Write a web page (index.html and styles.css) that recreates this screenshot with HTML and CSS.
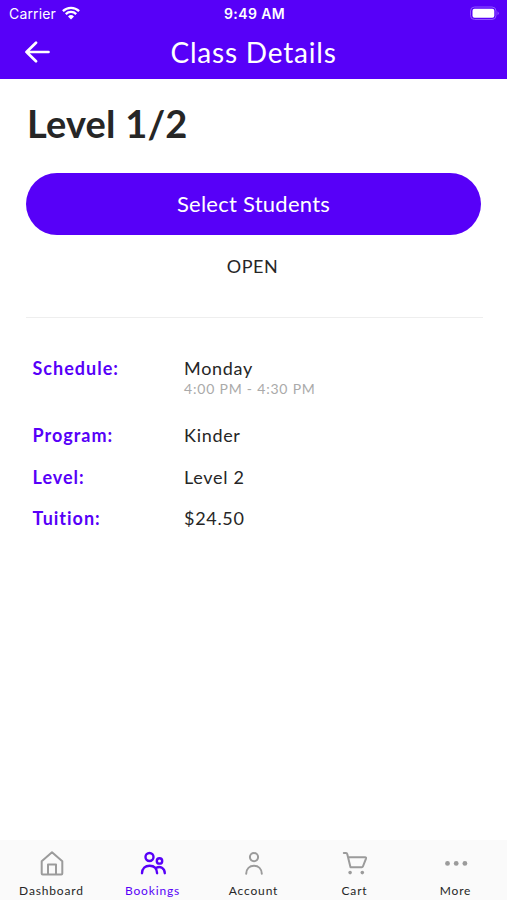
FILE: index.html
```html
<!DOCTYPE html>
<html lang="en">
<head>
<meta charset="utf-8">
<title>Class Details</title>
<link rel="stylesheet" href="styles.css">
</head>
<body>
<div class="screen">
  <header class="header">
    <div class="status">
      <div class="carrier"><span>Carrier</span>
        <svg width="18" height="14" viewBox="0 0 18 14" fill="none" stroke="#fff" stroke-width="2.3"><path d="M.9 5.1a11.6 11.6 0 0 1 16.2 0M3.8 8.1a7.4 7.4 0 0 1 10.4 0"/><path d="M6 10.5a4.3 4.3 0 0 1 6 0L9 13.500z" fill="#fff" stroke="none"/></svg>
      </div>
      <span class="time">9:49 AM</span>
      <svg class="battery" width="31" height="15" viewBox="0 0 31 15"><rect x="1.500" y="1" width="25.500" height="12.500" rx="4" fill="none" stroke="#8f55ff"/><rect x="3.500" y="2.800" width="21.800" height="9" rx="2" fill="#fff"/><path d="M28.500 5.300q2.600 2 0 4z" fill="#8f55ff"/></svg>
    </div>
    <div class="titlebar">
      <svg class="back" width="26" height="22" viewBox="0 0 26 22" fill="none" stroke="#fff" stroke-width="2.7" stroke-linecap="round" stroke-linejoin="round"><path d="M24.500 11H2.500M12 1.700L2.500 11l9.500 9.300"/></svg>
      <h1 class="title">Class Details</h1>
    </div>
  </header>
  <main class="content">
    <h2 class="name">Level 1/2</h2>
    <button class="select"><span>Select Students</span></button>
    <p class="state"><span>OPEN</span></p>
    <dl class="details">
      <div class="row tall"><dt>Schedule:</dt><dd><span>Monday</span><small>4:00 PM - 4:30 PM</small></dd></div>
      <div class="row"><dt>Program:</dt><dd>Kinder</dd></div>
      <div class="row"><dt>Level:</dt><dd>Level 2</dd></div>
      <div class="row"><dt>Tuition:</dt><dd>$24.50</dd></div>
    </dl>
  </main>
  <nav class="tabs">
    <a class="tab"><svg viewBox="0 0 26 26"><path d="M2.700 11.200L13 2.200l10.300 9v12.300q0 1-1 1H3.700q-1 0-1-1zM9 24.300v-9.800h8v9.800"/></svg><span>Dashboard</span></a>
    <a class="tab active"><svg viewBox="0 0 26 26"><circle cx="9.500" cy="7" r="4"/><circle cx="19.500" cy="10.900" r="2.700"/><path d="M2 23.200C2.200 18.400 5.300 15.700 9.600 15.700s7.300 2.700 7.500 7.500M16.300 17.800c3.900-2.200 8.300.2 8.500 5.400"/></svg><span>Bookings</span></a>
    <a class="tab"><svg viewBox="0 0 26 26"><circle cx="13" cy="7.100" r="4.100"/><path d="M5.200 23.700C5.400 18.700 8.600 15.800 13 15.800s7.600 2.900 7.800 7.900"/></svg><span>Account</span></a>
    <a class="tab"><svg viewBox="0 0 26 26"><path d="M1.800 3h2.200q1 0 1.300 1.200L8.500 17.300h11.300q.8 0 1.100-.8L24 8.600q.4-1.400-1-1.400H6.200"/><g fill="currentColor" stroke="none"><circle cx="8.100" cy="22.600" r="1.800"/><circle cx="20.300" cy="22.600" r="1.800"/></g></svg><span>Cart</span></a>
    <a class="tab"><svg viewBox="0 0 26 26"><g fill="currentColor" stroke="none"><circle cx="4.500" cy="13.400" r="2.400"/><circle cx="13.200" cy="13.400" r="2.400"/><circle cx="21.900" cy="13.400" r="2.400"/></g></svg><span>More</span></a>
  </nav>
</div>
</body>
</html>
```

FILE: styles.css
```css
* { box-sizing: border-box; }
body, h1, h2, p, dl, dd { margin: 0; }
body { background: #fff; color: #262626; font-family: Lato, "Open Sans", sans-serif; }
.screen { width: 507px; height: 900px; display: flex; flex-direction: column; }
.header { height: 79px; flex: none; background: #5700f8; color: #fff; }
.status { height: 27px; padding: 0 7px 0 9px; display: grid; grid-template-columns: 1fr auto 1fr; align-items: center; font-family: Inter, sans-serif; font-size: 14px; }
.carrier { display: flex; align-items: center; gap: 6px; letter-spacing: .15px; }
.carrier svg { margin-top: -2px; }
.time { font-weight: 600; font-size: 14px; letter-spacing: .4px; }
.battery { justify-self: end; }
.titlebar { height: 50px; display: grid; grid-template-columns: 26px 1fr 26px; align-items: center; padding: 0 24px; }
.title { margin-top: -1px; font-size: 28px; line-height: 34px; font-weight: 400; letter-spacing: .8px; text-align: center; }
.content { flex: 1; padding: 20px 24px 0 26px; }
.name { font-size: 38px; line-height: 48px; font-weight: 700; letter-spacing: .2px; padding-left: 1px; }
.select { display: block; width: 455px; height: 62px; margin-top: 26px; padding: 0; border: 0; border-radius: 31px; background: #5700f8; color: #fff; font: 400 22px/26px Lato, sans-serif; letter-spacing: .25px; }
.state { margin-top: 19px; width: 453px; text-align: center; font-size: 18px; line-height: 24px; letter-spacing: .5px; }
.details { margin-top: 39px; padding: 38px 0 0 6px; border-top: 1px solid #eee; }
.row { display: grid; grid-template-columns: 152px 1fr; height: 41.500px; font-size: 18px; line-height: 24px; letter-spacing: .6px; }
.row.tall { height: 67px; }
.row dt { padding-left: .5px; color: #5700f8; font-weight: 700; letter-spacing: 1px; }
.row dd { letter-spacing: .7px; }
.row dd span, .row small { display: block; }
.row small { color: #aaa; font-size: 14px; line-height: 18px; letter-spacing: .8px; }
.tabs { height: 60px; flex: none; display: grid; grid-template-columns: repeat(5, 1fr); padding: 0 1px; background: #fafafa; }
.tab { display: flex; flex-direction: column; align-items: center; padding-top: 10px; color: #9b9b9b; }
.tab svg { width: 26px; height: 26px; fill: none; stroke: currentColor; stroke-width: 2; stroke-linecap: round; stroke-linejoin: round; }
.tab span { margin-top: 7px; color: #262626; font-size: 12px; line-height: 16px; letter-spacing: .85px; }
.tab.active, .tab.active span { color: #5700f8; }
.tab.active svg { stroke-width: 2.4; }
```
